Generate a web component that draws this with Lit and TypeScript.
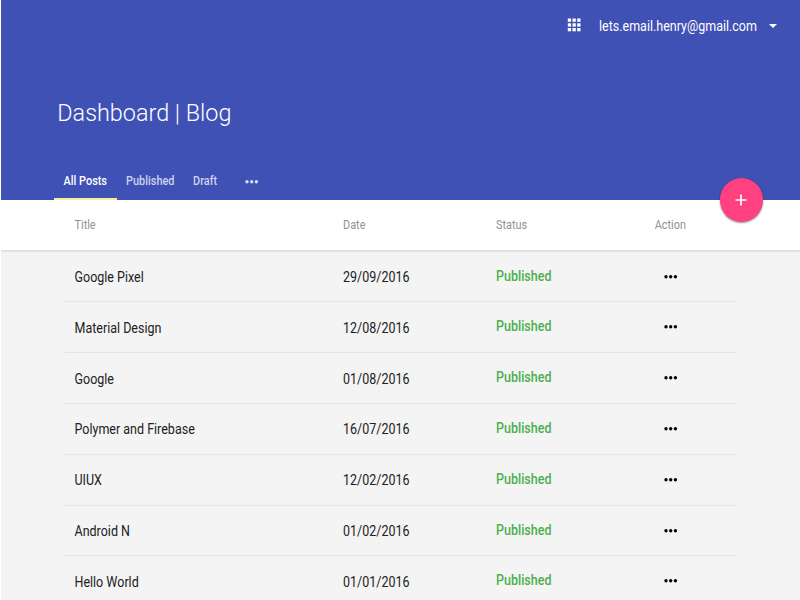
import { LitElement, html, css, svg } from "lit";
import { customElement, property } from "lit/decorators.js";

interface Post {
  title: string;
  date: string;
}

const POSTS: Post[] = [
  { title: "Google Pixel", date: "29/09/2016" },
  { title: "Material Design", date: "12/08/2016" },
  { title: "Google", date: "01/08/2016" },
  { title: "Polymer and Firebase", date: "16/07/2016" },
  { title: "UIUX", date: "12/02/2016" },
  { title: "Android N", date: "01/02/2016" },
  { title: "Hello World", date: "01/01/2016" },
];

@customElement("more-dots")
export class MoreDots extends LitElement {
  static styles = css`
    :host { display: block; width: 14px; height: 4px; }
    svg { display: block; fill: currentColor; }
  `;
  render() {
    return html`<svg width="14" height="4" viewBox="0 0 14 4">
      <circle cx="2" cy="1.8" r="1.7" /><circle cx="6.7" cy="1.8" r="1.7" /><circle cx="11.4" cy="1.8" r="1.7" />
    </svg>`;
  }
}

@customElement("post-row")
export class PostRow extends LitElement {
  @property({ attribute: false }) post!: Post;
  static styles = css`
    :host {
      display: grid;
      grid-template-columns: 268.5px 153px 167.5px 1fr;
      box-sizing: border-box;
      height: 50.8px;
      margin: 0 64px 0 64px;
      padding-left: 9.5px;
      align-items: center;
      border-bottom: 1px solid #e5e5e5;
      font-size: 12.5px;
      color: #212121;
    }
    span { transform: translateY(0.8px) scaleY(1.1); }
    .status { color: #4caf50; font-weight: 500; padding-bottom: 1px; transform: scaleY(1.1); }
    .dots { color: #000; }
  `;
  render() {
    return html`<span class="title">${this.post.title}</span>
      <span class="date">${this.post.date}</span>
      <span class="status">Published</span>
      <more-dots class="dots"></more-dots>`;
  }
}

@customElement("app-root")
export class AppRoot extends LitElement {
  static styles = css`
    :host {
      display: flex;
      flex-direction: column;
      position: relative;
      box-sizing: border-box;
      width: 800px;
      height: 600px;
      overflow: hidden;
      border-left: 1px solid #fff;
      background: #f4f4f4;
      font-family: Roboto, sans-serif;
    }
    .hero {
      flex: none;
      height: 200px;
      display: flex;
      flex-direction: column;
      background: #3f51b5;
      color: #fff;
    }
    .account {
      height: 52px;
      display: flex;
      align-items: center;
      justify-content: flex-end;
      padding-right: 23px;
    }
    .apps { margin: 0 18px 2px 0; fill: #fff; }
    .email { font-size: 12.5px; width: 158px; white-space: nowrap; transform: translateY(0.8px) scaleY(1.1); padding-bottom: 1px; }
    .caret { margin: 0 0 1px 12px; fill: #fff; }
    h1 {
      margin: 43px 0 0 56.3px;
      height: 34px;
      line-height: 34px;
      font-size: 23.4px;
      font-weight: 300;
      transform: translateY(0.5px) scaleY(1.04);
    }
    .tabs {
      margin: auto 0 0 53px;
      height: 37px;
      display: flex;
      font-size: 10.9px;
      font-weight: 500;
    }
    .tab {
      box-sizing: border-box;
      height: 37px;
      line-height: 37px;
      padding: 0 9.6px;
      color: #cfd3ed;
      white-space: nowrap;
    }
    .tab span { display: inline-block; transform: scaleY(1.11); }
    .active { color: #fff; width: 62.5px; border-bottom: 2px solid #f2f09c; }
    .published { width: 67px; }
    .draft { width: 61.5px; }
    .tab-more { margin-top: 17px; color: #d9dcf0; }
    .head {
      flex: none;
      display: grid;
      grid-template-columns: 268.5px 153px 158.7px 1fr;
      align-items: center;
      box-sizing: border-box;
      height: 51px;
      padding-left: 73.5px;
      background: #fff;
      border-bottom: 1px solid #dedede;
      box-shadow: 0 1px 1px rgba(0, 0, 0, 0.06);
      font-size: 10.9px;
      color: #929292;
      margin-bottom: 0.7px;
    }
    .head span { transform: scaleY(1.11); }
    .fab {
      position: absolute;
      left: 718.5px;
      top: 178px;
      width: 43.5px;
      height: 44px;
      border-radius: 50%;
      background: #ff4081;
      box-shadow: 0 1px 2px rgba(0, 0, 0, 0.45);
      display: grid;
      place-items: center;
    }
    .fab svg { stroke: #fff; }
  `;
  render() {
    return html`
      <header class="hero">
        <div class="account">
          <svg class="apps" width="14" height="14" viewBox="0 0 14 14">
            ${[0.5, 5.3, 10].map((y) => [0.8, 5.5, 10.2].map((x) => svg`<rect x=${x} y=${y} width="3.3" height="3.3" />`))}
          </svg>
          <span class="email">lets.email.henry@gmail.com</span>
          <svg class="caret" width="8" height="4" viewBox="0 0 8 4"><path d="M0 0h8L4 4z" /></svg>
        </div>
        <h1>Dashboard | Blog</h1>
        <nav class="tabs">
          <div class="tab active"><span>All Posts</span></div>
          <div class="tab published"><span>Published</span></div>
          <div class="tab draft"><span>Draft</span></div>
          <more-dots class="tab-more"></more-dots>
        </nav>
      </header>
      <div class="head"><span>Title</span><span>Date</span><span>Status</span><span>Action</span></div>
      <main>${POSTS.map((p) => html`<post-row .post=${p}></post-row>`)}</main>
      <div class="fab">
        <svg width="12" height="12" viewBox="0 0 12 12"><path d="M6 0.5v11M0.5 6h11" stroke-width="1.6" /></svg>
      </div>
    `;
  }
}
